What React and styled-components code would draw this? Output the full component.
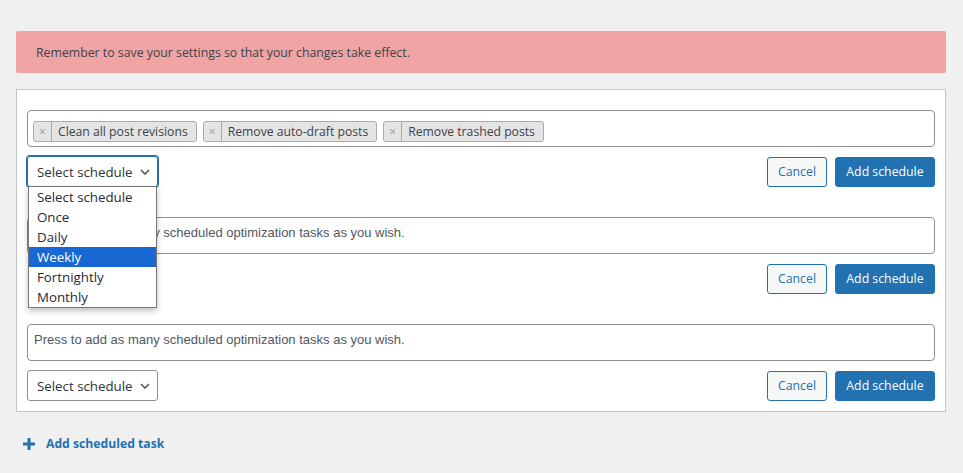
import React from "react";
import styled, { createGlobalStyle } from "styled-components";

const GlobalStyle = createGlobalStyle`
  html, body {
    margin: 0;
    padding: 0;
    background: #f0f0f1;
    font-family: "Open Sans", "Noto Sans", sans-serif;
    color: #3c434a;
  }
`;

const schedules = ["Select schedule", "Once", "Daily", "Weekly", "Fortnightly", "Monthly"];

const Chevron = () => (
    <svg width="10" height="6" viewBox="0 0 10 6" fill="none">
        <path d="M1 1l4 4 4-4" stroke="#50575e" strokeWidth="1.6" />
    </svg>
);

const Tag = ({ label }) => (
    <TagItem>
        <TagRemove>×</TagRemove>
        <TagLabel>{label}</TagLabel>
    </TagItem>
);

const ScheduleBlock = ({ tags, open, covered }) => (
    <Block>
        <Field>
            {tags ? (
                tags.map((t) => <Tag key={t} label={t} />)
            ) : (
                <Placeholder>Press to add as many scheduled optimization tasks as you wish.</Placeholder>
            )}
        </Field>
        <Controls>
            <SelectWrap>
                <Select focused={open} covered={covered}>
                    <span>Select schedule</span>
                    <Chevron />
                </Select>
                {open && (
                    <Dropdown>
                        {schedules.map((s) => (
                            <Option key={s} active={s === "Weekly"}>{s}</Option>
                        ))}
                    </Dropdown>
                )}
            </SelectWrap>
            <Buttons>
                <CancelButton>Cancel</CancelButton>
                <PrimaryButton>Add schedule</PrimaryButton>
            </Buttons>
        </Controls>
    </Block>
);

const App = () => (
    <>
        <GlobalStyle />
        <Page>
            <Notice>Remember to save your settings so that your changes take effect.</Notice>
            <Panel>
                <ScheduleBlock
                    open
                    tags={["Clean all post revisions", "Remove auto-draft posts", "Remove trashed posts"]}
                />
                <ScheduleBlock covered />
                <ScheduleBlock />
            </Panel>
            <AddTask>
                <svg width="12" height="12" viewBox="0 0 12 12">
                    <path d="M6 0v12M0 6h12" stroke="#2271b1" strokeWidth="3" />
                </svg>
                Add scheduled task
            </AddTask>
        </Page>
    </>
);

const Page = styled.div`
  padding: 31px 17px 20px 16px;
`;

const Notice = styled.div`
  background: #f0a4a4;
  border-radius: 2px;
  height: 42px;
  display: flex;
  align-items: center;
  padding: 0 20px;
  font-size: 12.3px;
  color: #3c434a;
`;

const Panel = styled.div`
  margin-top: 16px;
  background: #fff;
  border: 1px solid #c3c4c7;
  padding: 20px 10px 10px;
  display: flex;
  flex-direction: column;
  gap: 30px;
`;

const Block = styled.div`
  display: flex;
  flex-direction: column;
  gap: 9px;
`;

const Field = styled.div`
  box-sizing: border-box;
  height: 37px;
  border: 1px solid #8c8f94;
  border-radius: 4px;
  padding: 9px 5px;
  display: flex;
  align-items: flex-start;
  gap: 6px;
`;

const Placeholder = styled.div`
  font-family: "Liberation Sans", Arial, sans-serif;
  font-size: 13px;
  color: #50575e;
  margin-top: -2px;
  margin-left: 1px;
`;

const TagItem = styled.div`
  height: 21px;
  box-sizing: border-box;
  display: flex;
  align-items: center;
  background: #e4e4e4;
  border: 1px solid #aaa;
  border-radius: 3px;
  font-size: 12.2px;
  color: #3c434a;
  margin-top: 1px;
`;

const TagRemove = styled.span`
  width: 17px;
  text-align: center;
  color: #999;
  font-size: 12px;
  border-right: 1px solid #aaa;
  line-height: 19px;
`;

const TagLabel = styled.span`
  padding: 0 8px 0 6px;
  line-height: 19px;
`;

const Controls = styled.div`
  display: flex;
  justify-content: space-between;
  align-items: center;
`;

const SelectWrap = styled.div`
  position: relative;
`;

const Select = styled.div`
  box-sizing: border-box;
  width: 131px;
  height: 31px;
  border: 1px solid ${(p) => (p.focused ? "#2271b1" : "#8c8f94")};
  box-shadow: ${(p) => (p.focused ? "0 0 0 1px #2271b1" : "none")};
  visibility: ${(p) => (p.covered ? "hidden" : "visible")};
  border-radius: 3px;
  display: flex;
  align-items: center;
  justify-content: space-between;
  padding: 0 7px 0 9px;
  font-size: 13.3px;
  color: #2c3338;
`;

const Dropdown = styled.div`
  position: absolute;
  top: 30px;
  left: 1px;
  width: 129px;
  box-sizing: border-box;
  background: #fff;
  border: 1px solid #767676;
  box-shadow: 0 3px 6px rgba(0, 0, 0, 0.25);
  z-index: 5;
`;

const Option = styled.div`
  height: 20px;
  line-height: 20px;
  padding: 0 8px;
  font-size: 13.3px;
  color: ${(p) => (p.active ? "#fff" : "#1d2a3a")};
  background: ${(p) => (p.active ? "#1967d2" : "transparent")};
`;

const Buttons = styled.div`
  display: flex;
  gap: 8px;
`;

const BaseButton = styled.button`
  box-sizing: border-box;
  height: 30px;
  border-radius: 3px;
  font-family: "Open Sans", "Noto Sans", sans-serif;
  font-size: 12.3px;
  padding: 0;
  white-space: nowrap;
  cursor: pointer;
`;

const CancelButton = styled(BaseButton)`
  width: 60px;
  background: #f6f7f7;
  border: 1px solid #2271b1;
  color: #2271b1;
`;

const PrimaryButton = styled(BaseButton)`
  width: 100px;
  background: #2271b1;
  border: 1px solid #2271b1;
  color: #fff;
`;

const AddTask = styled.div`
  margin-top: 23px;
  margin-left: 7px;
  display: flex;
  align-items: center;
  gap: 11px;
  font-size: 12.2px;
  font-weight: 700;
  color: #2271b1;
`;

export default App;
